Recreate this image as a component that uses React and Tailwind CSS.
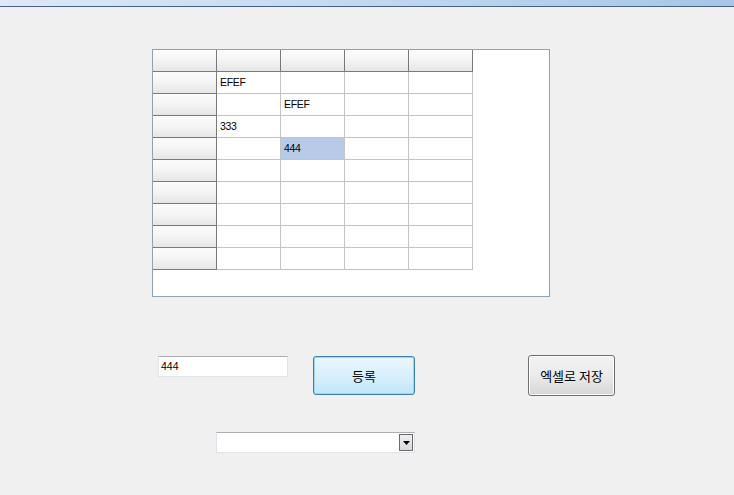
const cols = 4;
const rows = 9;

const data = {
  "0-0": "EFEF",
  "1-1": "EFEF",
  "2-0": "333",
  "3-1": "444",
};

const HeaderCell = ({ w }) => (
  <div
    className={`${w} h-[22px] shrink-0 border-r border-b border-[#7a7a7a] bg-gradient-to-b from-[#fcfcfc] via-[#f4f4f4] to-[#e6e6e6]`}
  />
);

const App = () => {
  return (
    <div className="w-[734px] h-[495px] bg-[#f0f0f0] flex flex-col font-['Liberation_Sans','Noto_Sans_CJK_KR',sans-serif] text-[10.5px] text-black overflow-hidden">
      {/* window title strip */}
      <div className="h-[6px] bg-gradient-to-r from-[#dce9f8] via-[#c3d8ef] to-[#a5c6e8]" />
      <div className="h-px bg-[#46607f]" />

      {/* grid view */}
      <div className="mt-[42px] ml-[152px] w-[398px] h-[248px] border border-[#8da2b3] bg-white">
        <div className="flex">
          <HeaderCell w="w-[64px]" />
          {Array.from({ length: cols }).map((_, i) => (
            <HeaderCell key={i} w="w-[64px]" />
          ))}
        </div>
        {Array.from({ length: rows }).map((_, r) => (
          <div key={r} className="flex">
            <div className="w-[64px] h-[22px] shrink-0 border-r border-b border-[#7a7a7a] bg-gradient-to-b from-[#fcfcfc] via-[#f4f4f4] to-[#e6e6e6]" />
            {Array.from({ length: cols }).map((_, c) => {
              const key = `${r}-${c}`;
              const sel = key === "3-1";
              return (
                <div
                  key={c}
                  className={`w-[64px] h-[22px] shrink-0 border-r border-b border-[#c4c4c4] flex items-center pl-[3px] leading-none tracking-[-0.3px] ${sel ? "bg-[#b7cbe9]" : "bg-white"}`}
                >
                  {data[key] || ""}
                </div>
              );
            })}
          </div>
        ))}
      </div>

      {/* controls row */}
      <div className="flex items-start mt-[58px]">
        <div className="ml-[158px] mt-px w-[130px] h-[21px] bg-white border border-[#e2e3ea] border-t-[#abadb3] flex items-center pl-[2px] leading-none">
          444
        </div>
        <button className="ml-[25px] mt-px w-[102px] h-[39px] rounded-[3px] border border-[#3c7fb1] bg-gradient-to-b from-[#eaf6fd] via-[#d9f0fc] to-[#bee6fd] shadow-[inset_0_0_0_1px_#9ed6f5] text-[13px] font-['Noto_Sans_CJK_KR',sans-serif] flex items-center justify-center">
          등록
        </button>
        <button className="ml-[113px] w-[87px] h-[41px] rounded-[3px] border border-[#707070] bg-gradient-to-b from-[#f2f2f2] via-[#ebebeb] to-[#d6d6d6] shadow-[inset_0_0_0_1px_#fcfcfc] text-[13px] font-['Noto_Sans_CJK_KR',sans-serif] flex items-center justify-center">
          엑셀로 저장
        </button>
      </div>

      {/* combo box */}
      <div className="ml-[216px] mt-[36px] w-[199px] h-[21px] bg-white border border-[#e2e3ea] border-t-[#abadb3] flex justify-end items-center pr-px">
        <div className="w-[14px] h-[17px] border border-[#6b6b6b] bg-gradient-to-b from-[#f0f0f0] to-[#d8d8d8] flex items-center justify-center">
          <svg width="7" height="4" viewBox="0 0 7 4">
            <path d="M0 0h7L3.5 4z" fill="#000" />
          </svg>
        </div>
      </div>
    </div>
  );
};

export default App;
